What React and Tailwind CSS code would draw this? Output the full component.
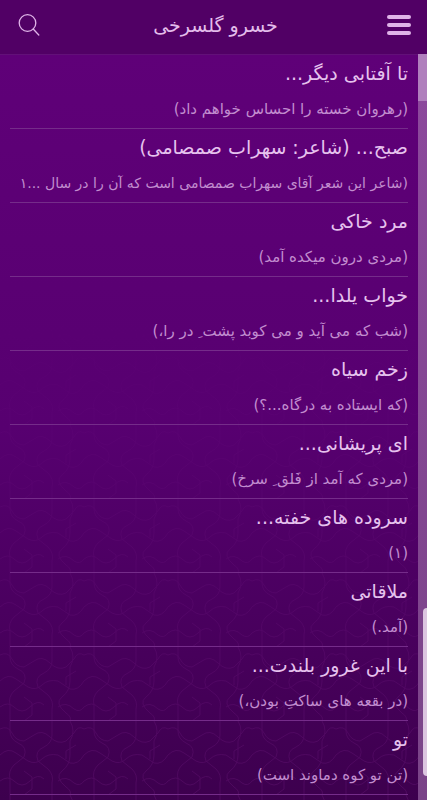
import React from "react";

const poems = [
  { id: 1, title: "تا آفتابی دیگر...", verse: "(رهروان خسته را احساس خواهم داد)" },
  { id: 2, title: "صبح... (شاعر: سهراب صمصامی)", verse: "(شاعر این شعر آقای سهراب صمصامی است که آن را در سال ...۱", long: true },
  { id: 3, title: "مرد خاکی", verse: "(مردی درون میکده آمد)" },
  { id: 4, title: "خواب یلدا...", verse: "(شب که می آید و می کوبد پشت ِ در را،)" },
  { id: 5, title: "زخم سیاه", verse: "(که ایستاده به درگاه...؟)" },
  { id: 6, title: "ای پریشانی...", verse: "(مردی که آمد از فَلق ِ سرخ)" },
  { id: 7, title: "سروده های خفته...", verse: "(۱)" },
  { id: 8, title: "ملاقاتی", verse: "(آمد.)" },
  { id: 9, title: "با این غرور بلندت...", verse: "(در بقعه های ساکتِ بودن،)" },
  { id: 10, title: "تو", verse: "(تن تو کوه دماوند است)" },
];

function Header() {
  return (
    <header dir="ltr" className="flex h-[54px] items-center justify-between bg-[#510065] px-4 pb-1">
      <button type="button" aria-label="جستجو" className="flex w-7 items-center">
        <svg viewBox="0 0 28 28" className="h-7 w-7" fill="none" stroke="#dfb3e8" strokeWidth="1.3" strokeLinecap="round">
          <circle cx="11.5" cy="12" r="8.3" />
          <path d="M17.2 18 L22.8 24" />
        </svg>
      </button>
      <h1 dir="rtl" className="text-[19px] leading-8 text-[#e3bdeb]">خسرو گلسرخی</h1>
      <button type="button" aria-label="منو" className="flex w-6 flex-col gap-1">
        <span className="h-1 rounded-full bg-[#dfb3e8]" />
        <span className="h-1 rounded-full bg-[#dfb3e8]" />
        <span className="h-1 rounded-full bg-[#dfb3e8]" />
      </button>
    </header>
  );
}

// faint knotwork that fades in toward the bottom of the list
function Pattern() {
  return (
    <svg className="pointer-events-none absolute inset-0 h-full w-full" aria-hidden="true">
      <defs>
        <pattern id="knots" width="84" height="74" patternUnits="userSpaceOnUse">
          <g fill="none" stroke="#8a2a98" strokeWidth="1">
            <path d="M0 8 Q8 4 12 12 T24 20 L34 14 Q42 8 50 16 T66 20 L74 12 Q78 4 84 8" />
            <path d="M10 0 V10 Q10 18 18 22 Q28 26 24 36 L14 44 Q8 50 10 58 V74" />
            <path d="M52 0 V14 Q52 22 44 26 Q34 30 38 40 L48 48 Q54 54 52 62 V74" />
            <path d="M0 34 Q8 26 16 32 L28 40 Q36 44 42 38 T58 34 L70 42 Q78 44 84 34" />
            <path d="M70 0 Q76 10 70 20 V34 Q70 44 62 50 T66 66 Q72 70 70 74" />
            <path d="M0 60 Q8 54 14 60 Q22 68 30 60 T44 58 M58 60 Q66 54 74 62 Q80 66 84 60" />
            <path d="M24 50 L32 56 V68 L24 74 M76 24 L66 30 V38" />
          </g>
        </pattern>
        <linearGradient id="fade" x1="0" y1="0" x2="0" y2="1">
          <stop offset="0.3" stopColor="#000" />
          <stop offset="1" stopColor="#fff" />
        </linearGradient>
        <mask id="fadeMask">
          <rect width="100%" height="100%" fill="url(#fade)" />
        </mask>
      </defs>
      <rect width="100%" height="100%" fill="url(#knots)" mask="url(#fadeMask)" opacity="0.22" />
    </svg>
  );
}

function PoemRow({ poem }) {
  return (
    <li className="border-b border-[#752c8a]">
      <a href={`#poem-${poem.id}`} className="block h-[73px] pt-[2px]">
        <h2 className="truncate text-[19px] leading-8 text-[#e6c2ee]">{poem.title}</h2>
        <p className={`leading-10 whitespace-nowrap text-[#c28dcf] ${poem.long ? "text-[14px]" : "text-[15px]"}`}>{poem.verse}</p>
      </a>
    </li>
  );
}

export default function App() {
  return (
    <div dir="rtl" className="relative flex min-h-screen flex-col bg-[#3d004e] font-['DejaVu_Sans',sans-serif]">
      <Header />
      <main dir="ltr" className="flex flex-1">
        <div dir="rtl" className="relative min-w-0 flex-1 border-t border-[#621078] bg-linear-to-b from-[#5f0078] via-[#570070] to-[#3d004e]">
          <Pattern />
          <ul className="relative mr-[10px] ml-[10px]">
            {poems.map((poem) => (
              <PoemRow key={poem.id} poem={poem} />
            ))}
          </ul>
        </div>
        <div className="w-[9px] bg-linear-to-b from-[#8d499d] to-[#7a4488]">
          <div className="h-[47px] bg-[#b07fbd]" />
        </div>
      </main>
      <div className="absolute right-0 bottom-6 h-[168px] w-1 rounded-l bg-[#dcc6e0]" />
    </div>
  );
}
